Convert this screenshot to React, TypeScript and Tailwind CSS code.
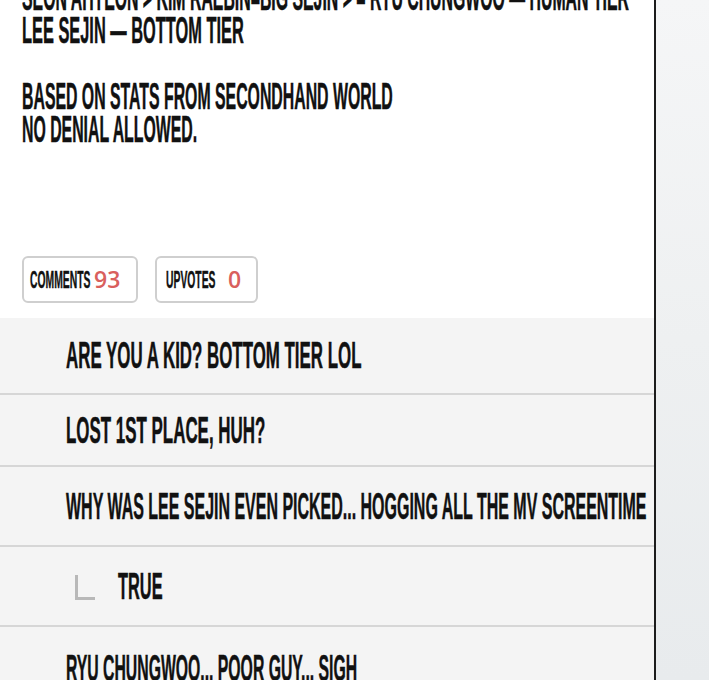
const heading = "inline-block origin-left scale-x-[0.44] whitespace-nowrap [-webkit-text-stroke:0.5px_#111]";
const rowText = "inline-block origin-left whitespace-nowrap text-[36px] leading-[33px] font-bold text-[#111] [-webkit-text-stroke:0.5px_#111]";

function Stat({ label, value, labelWidth, className }: { label: string; value: string; labelWidth: string; className: string }) {
  return (
    <div className={`flex h-[47px] items-center rounded-md border-2 border-[#cfcfcf] bg-white ${className}`}>
      <span className={`flex ${labelWidth} items-center whitespace-nowrap pt-[2px]`}>
        <span className="inline-block origin-left scale-x-[0.45] text-[23px] leading-none font-bold text-[#111] [-webkit-text-stroke:0.4px_#111]">
          {label}
        </span>
      </span>
      <span className="font-['Open_Sans',sans-serif] text-[23px] leading-none font-semibold text-[#d9605d]">{value}</span>
    </div>
  );
}

function Row({ h, children }: { h: string; children: React.ReactNode }) {
  return (
    <div className={`flex ${h} items-center border-b-2 border-[#d6d6d6] pl-[66px]`}>
      {children}
    </div>
  );
}

export default function App() {
  return (
    <div className="flex h-[680px] w-[709px] overflow-hidden font-['Liberation_Sans',Arial,sans-serif]">
      <main className="flex w-[656px] shrink-0 flex-col border-r-2 border-[#1c1c1c] bg-white">
        {/* post body */}
        <div className="-mt-[19px] px-[22px] text-[36px] leading-[33px] font-bold text-[#111]">
          <p><span className={heading}>SEON AHYEON &gt; KIM RAEBIN=BIG SEJIN &gt; = RYU CHUNGWOO — HUMAN TIER</span></p>
          <p><span className={`${heading} scale-x-[0.455]`}>LEE SEJIN — BOTTOM TIER</span></p>
          <p className="h-[33px]" />
          <p><span className={heading}>BASED ON STATS FROM SECONDHAND WORLD</span></p>
          <p><span className={heading}>NO DENIAL ALLOWED.</span></p>
        </div>

        {/* counters */}
        <div className="mt-[110px] flex gap-[17px] px-[22px]">
          <Stat label="COMMENTS" value="93" labelWidth="w-[64px]" className="w-[116px] pl-[6px]" />
          <Stat label="UPVOTES" value="0" labelWidth="w-[62px]" className="w-[103px] pl-[9px]" />
        </div>

        {/* comments */}
        <section className="mt-[15px] flex-1 bg-[#f4f4f4]">
          <Row h="h-[77px]">
            <span className={`${rowText} scale-x-[0.469]`}>ARE YOU A KID? BOTTOM TIER LOL</span>
          </Row>
          <Row h="h-[72px]">
            <span className={`${rowText} scale-x-[0.47]`}>LOST 1ST PLACE, HUH?</span>
          </Row>
          <Row h="h-[80px]">
            <span className={`${rowText} scale-x-[0.444]`}>WHY WAS LEE SEJIN EVEN PICKED... HOGGING ALL THE MV SCREENTIME</span>
          </Row>
          <Row h="h-[80px]">
            <div className="ml-[9px] mr-[23px] mt-[2px] h-[25px] w-[20px] border-b-[3px] border-l-[3px] border-[#b8b8b8]" />
            <span className={`${rowText} scale-x-[0.455]`}>TRUE</span>
          </Row>
          <div className="pl-[66px] pt-[25px]">
            <span className={`${rowText} scale-x-[0.438]`}>RYU CHUNGWOO... POOR GUY... SIGH</span>
          </div>
        </section>
      </main>
      <aside className="flex-1 bg-gradient-to-b from-[#f5f6f7] via-[#eef0f1] to-[#e8ebed]" />
    </div>
  );
}
